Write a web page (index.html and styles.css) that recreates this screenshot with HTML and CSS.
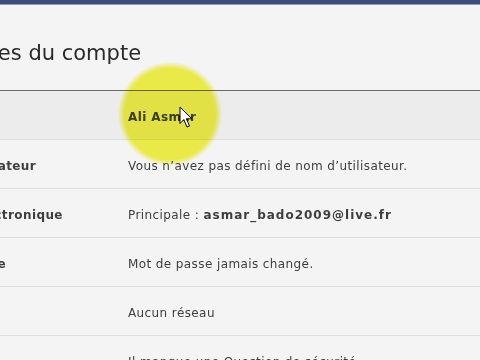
FILE: index.html
```
<!doctype html>
<html lang="fr">
<head>
    <meta charset="utf-8">
    <meta name="viewport" content="width=device-width, initial-scale=1">
    <title>Paramètres du compte</title>
    <link rel="stylesheet" href="styles.css">
</head>
<body>
    <div class="bluebar"></div>
    <main class="page">
        <h1>Paramètres du compte</h1>

        <div class="settings">
            <div class="row head">
                <div class="label"></div>
                <div class="value name">Ali Asmar</div>
            </div>
            <div class="row">
                <div class="label">Nom d’utilisateur</div>
                <div class="value">Vous n’avez pas défini de nom d’utilisateur.</div>
            </div>
            <div class="row">
                <div class="label">Adresse électronique</div>
                <div class="value">Principale : <b>asmar_bado2009@live.fr</b></div>
            </div>
            <div class="row">
                <div class="label">Mot de passe</div>
                <div class="value">Mot de passe jamais changé.</div>
            </div>
            <div class="row">
                <div class="label">Réseaux</div>
                <div class="value">Aucun réseau</div>
            </div>
            <div class="row">
                <div class="label">Question</div>
                <div class="value">Il manque une Question de sécurité.</div>
            </div>
        </div>
    </main>

    <div class="highlight"></div>
    <svg class="cursor" width="14" height="23" viewBox="0 0 14 23">
        <path d="M1 1 L1 17.5 L4.8 13.6 L8 21 L10.5 20 L7.4 12.8 L12.8 12.8 Z" fill="#fff" stroke="#000" stroke-width="1" stroke-linejoin="round"/>
    </svg>
</body>
</html>
```

FILE: styles.css
```
/*
 * Reset
 */

*,
*::before,
*::after {
    box-sizing: border-box;
    margin: 0;
    padding: 0;
}

html,
body {
    background-color: #f4f4f4;
    height: 100%;
    overflow: hidden;
}

body {
    color: #3e3e3e;
    font-family: "DejaVu Sans", Verdana, sans-serif;
    font-size: 12px;
    letter-spacing: 0.4px;
    position: relative;
}

.bluebar {
    background-color: #3e4c7c;
    border-bottom: 1px solid #8e9bbd;
    height: 5px;
}

.page {
    margin-left: -89px;
    width: 620px;
}

h1 {
    color: #2a2a2a;
    font-size: 21px;
    font-weight: normal;
    letter-spacing: 0;
    line-height: 24px;
    margin-left: -9px;
    padding: 36px 0 25px;
}

.settings {
    border-top: 1px solid #6a6a6a;
}

.row {
    align-items: center;
    border-bottom: 1px solid #dedede;
    display: grid;
    grid-template-columns: 217px 1fr;
    height: 49px;
    padding-top: 4px;
}

.row.head {
    background-color: #ececec;
}

.label {
    font-weight: bold;
}

.value b {
    letter-spacing: 1px;
}

.value.name {
    font-weight: bold;
}

.highlight {
    background: radial-gradient(circle, #f4f44a 0, #f4f44a 62%, rgba(244, 244, 74, 0) 71%);
    border-radius: 50%;
    height: 104px;
    left: 118px;
    mix-blend-mode: multiply;
    position: absolute;
    top: 62px;
    width: 104px;
}

.cursor {
    left: 179px;
    position: absolute;
    top: 106px;
}
```
